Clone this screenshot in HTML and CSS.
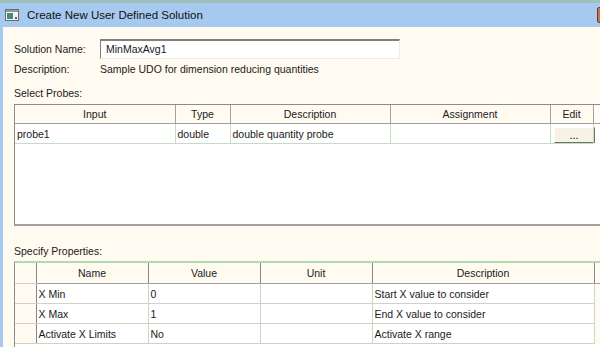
FILE: index.html
```html
<!DOCTYPE html>
<html lang="en">
<head>
    <meta charset="UTF-8">
    <title>Create New User Defined Solution</title>
    <link rel="stylesheet" href="styles.css">
</head>
<body>
    <div class="top-strip"></div>
    <div class="titlebar">
        <svg class="app-icon" width="14" height="12" viewBox="0 0 14 12">
            <rect x="0.5" y="0.5" width="13" height="11" fill="#f4f4f4" stroke="#6d6d6d"/>
            <rect x="1" y="1" width="12" height="2" fill="#8a9bb0"/>
            <rect x="2" y="4" width="6" height="6" fill="#3f8f7a"/>
            <rect x="10" y="8" width="2" height="2" fill="#5c5c5c"/>
        </svg>
        <span class="title">Create New User Defined Solution</span>
        <span class="close-btn"></span>
    </div>

    <div class="window">
        <div class="form">
            <span class="label">Solution Name:</span>
            <div class="textbox">MinMaxAvg1</div>
            <span class="label">Description:</span>
            <span class="value">Sample UDO for dimension reducing quantities</span>
        </div>

        <div class="section-label">Select Probes:</div>
        <div class="grid probes">
            <table>
                <colgroup>
                    <col style="width: 160px">
                    <col style="width: 55px">
                    <col style="width: 160px">
                    <col style="width: 160px">
                    <col style="width: 43px">
                    <col style="width: 40px">
                </colgroup>
                <thead>
                    <tr>
                        <th>Input</th>
                        <th>Type</th>
                        <th>Description</th>
                        <th>Assignment</th>
                        <th>Edit</th>
                        <th></th>
                    </tr>
                </thead>
                <tbody>
                    <tr>
                        <td>probe1</td>
                        <td>double</td>
                        <td>double quantity probe</td>
                        <td></td>
                        <td class="btn-cell"><button class="dots">...</button></td>
                        <td class="filler"></td>
                    </tr>
                </tbody>
            </table>
        </div>

        <div class="section-label props-label">Specify Properties:</div>
        <div class="grid props">
            <table>
                <colgroup>
                    <col style="width: 21px">
                    <col style="width: 112px">
                    <col style="width: 112px">
                    <col style="width: 112px">
                    <col style="width: 222px">
                    <col style="width: 40px">
                </colgroup>
                <thead>
                    <tr>
                        <th class="rowhead"></th>
                        <th>Name</th>
                        <th>Value</th>
                        <th>Unit</th>
                        <th>Description</th>
                        <th></th>
                    </tr>
                </thead>
                <tbody>
                    <tr>
                        <td class="rowhead"></td>
                        <td>X Min</td>
                        <td>0</td>
                        <td></td>
                        <td>Start X value to consider</td>
                        <td class="filler"></td>
                    </tr>
                    <tr>
                        <td class="rowhead"></td>
                        <td>X Max</td>
                        <td>1</td>
                        <td></td>
                        <td>End X value to consider</td>
                        <td class="filler"></td>
                    </tr>
                    <tr>
                        <td class="rowhead"></td>
                        <td>Activate X Limits</td>
                        <td>No</td>
                        <td></td>
                        <td>Activate X range</td>
                        <td class="filler"></td>
                    </tr>
                </tbody>
            </table>
        </div>
    </div>
</body>
</html>
```

FILE: styles.css
```css
body {
    margin: 0;
    width: 600px;
    height: 347px;
    overflow: hidden;
    font-family: "Liberation Sans", Arial, sans-serif;
    font-size: 10.5px;
    color: #1a1a1a;
    background-color: #fffbf0;
}
.top-strip {
    height: 3px;
    background-color: #9ebfba;
}
.titlebar {
    display: flex;
    align-items: center;
    height: 24px;
    padding-left: 5px;
    overflow: hidden;
    background-color: #a6c9ef;
}
.app-icon {
    margin-right: 8px;
}
.title {
    font-size: 11.5px;
    color: #111;
}
.close-btn {
    flex: none;
    margin-left: auto;
    margin-right: -9px;
    width: 10px;
    height: 14px;
    background-color: #c8705a;
    border: 1px solid #6a3a30;
    border-radius: 2px;
}
.window {
    height: 320px;
    border-left: 3px solid #a6c9ef;
    padding: 12px 0 0 11px;
}
.form {
    display: grid;
    grid-template-columns: 86px 300px;
    grid-template-rows: 20px 20px;
    align-items: center;
}
.textbox {
    height: 20px;
    box-sizing: border-box;
    padding-left: 5px;
    line-height: 17px;
    background-color: #fff;
    border-top: 2px solid #808080;
    border-left: 1px solid #808080;
    border-right: 1px solid #f0ece0;
    border-bottom: 1px solid #f0ece0;
}
.section-label {
    margin-top: 7px;
    line-height: 14px;
}
.props-label {
    margin-top: 18px;
}
.grid {
    margin-top: 4px;
    overflow: hidden;
    background-color: #fff;
}
.grid table {
    border-collapse: collapse;
    table-layout: fixed;
}
.probes table {
    width: 618px;
}
.props table {
    width: 619px;
}
.grid th {
    height: 18px;
    padding: 0;
    font-weight: normal;
    background-color: #fffbf0;
    border-right: 1px solid #a49ca6;
    border-bottom: 1px solid #a49ca6;
    box-shadow: inset 1px 0 #fff;
}
.grid td {
    height: 19px;
    padding: 0 0 0 2px;
    border-right: 1px solid #c4dcc4;
    border-bottom: 1px solid #c4dcc4;
    white-space: nowrap;
}
.grid td.filler {
    border: none;
}
.probes {
    height: 119px;
    border-top: 1px solid #8c8c8c;
    border-left: 1px solid #8c8c8c;
    border-bottom: 2px solid #a0a0a0;
}
.btn-cell {
    padding: 0;
}
.dots {
    display: block;
    width: 41px;
    height: 16px;
    margin: 2px 0 0 1px;
    padding: 0;
    font-family: inherit;
    font-size: 11px;
    line-height: 10px;
    background-color: #f6f2e6;
    border: 1px solid;
    border-color: #fff #6f6f6f #6f6f6f #fff;
}
.props {
    height: 90px;
    margin-top: 3px;
    border-top: 2px solid #b5d7b1;
    border-left: 1px solid #8c8c8c;
}
.props th {
    height: 20px;
    border-right-color: #8a7f90;
}
.props td {
    border-color: #cfd3c6;
}
.props .rowhead {
    background-color: #fffbf0;
    border-right: 1px solid #8a7f90;
    border-bottom: 1px solid #cfd3c6;
}
.props td.filler {
    background-color: #fffbf0;
}
```
